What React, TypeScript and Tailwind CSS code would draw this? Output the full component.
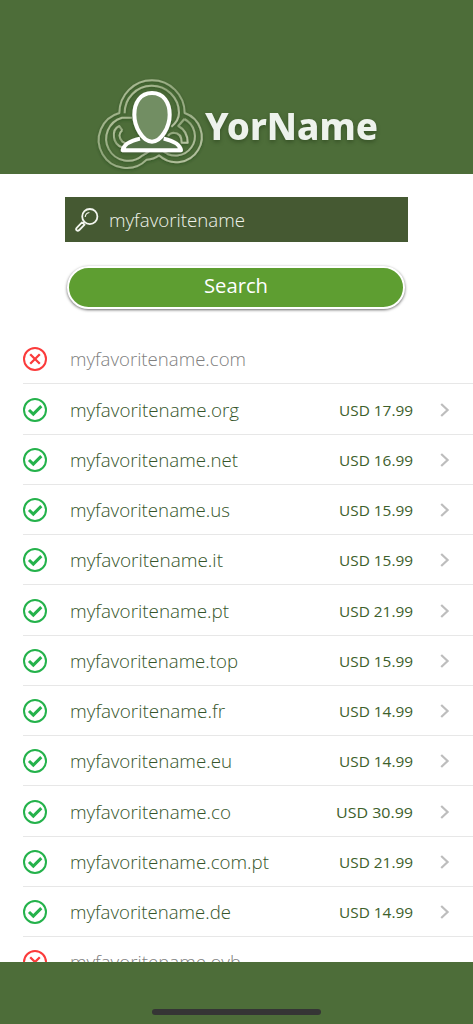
import React from "react";

type Domain = { ext: string; price?: string; width: string };

const domains: Domain[] = [
  { ext: "com", width: "176" },
  { ext: "org", price: "17.99", width: "169" },
  { ext: "net", price: "16.99", width: "168" },
  { ext: "us", price: "15.99", width: "160" },
  { ext: "it", price: "15.99", width: "153" },
  { ext: "pt", price: "21.99", width: "159" },
  { ext: "top", price: "15.99", width: "168" },
  { ext: "fr", price: "14.99", width: "155" },
  { ext: "eu", price: "14.99", width: "162" },
  { ext: "co", price: "30.99", width: "161" },
  { ext: "com.pt", price: "21.99", width: "199" },
  { ext: "de", price: "14.99", width: "161" },
  { ext: "ovh", width: "171" },
];

function Logo() {
  return (
    <svg viewBox="0 0 360 315" className="h-[105px] w-[120px] shrink-0 overflow-visible" fill="none">
      <defs>
        <linearGradient id="ring" x1="0" y1="0" x2="1" y2="1">
          <stop offset="0" stopColor="#b9c7a2" />
          <stop offset="0.45" stopColor="#8fa57a" />
          <stop offset="1" stopColor="#bac6a5" />
        </linearGradient>
        <filter id="shade" x="-20%" y="-20%" width="140%" height="150%">
          <feDropShadow dx="0" dy="4" stdDeviation="4" floodColor="#1f3315" floodOpacity="0.4" />
        </filter>
      </defs>
      <g stroke="url(#ring)" strokeWidth="6" strokeLinejoin="round" filter="url(#shade)">
        <path d="M88 129A98 98 0 0 1 284 129A76 76 0 1 1 207 256Q191 268 170 269A84 84 0 1 1 88 129Z" />
        <path d="M104 130A81 81 0 0 1 267 128Q267 151 244 170" />
        <path d="M104 130H126" />
        <path d="M126 143H96A66 66 0 1 0 158 256Q181 245 191 225" />
        <path d="M283 147A58 58 0 1 1 216 240L203 225" />
        <path d="M283 147L265 168Q293 183 293 218H275Q275 188 250 188Q239 189 234 198" />
        <path d="M97 181L88 168Q69 176 72 202Q75 225 98 233" />
        <path d="M97 181Q80 195 97 215L110 222" />
      </g>
      <g filter="url(#shade)" stroke="#fff" strokeWidth="12" strokeLinejoin="round">
        <path d="M150 206Q102 217 98 241H273Q269 217 221 206" fill="#54734a" />
        <path d="M186 69C151 69 133 98 133 134C133 170 158 215 186 215C214 215 239 170 239 134C239 98 221 69 186 69Z" fill="#728e64" />
      </g>
    </svg>
  );
}

function Magnifier() {
  return (
    <svg viewBox="0 0 24 24" className="h-6 w-6" fill="none" stroke="#f3f6ef" strokeWidth="1.8" strokeLinejoin="round">
      <circle cx="14.8" cy="8.6" r="7.6" />
      <path d="M9.1 14.3L7.9 15.5M7 14.4L1.7 19.8Q.5 21.2 1.7 22.3T4.3 22L9.6 16.6Z" />
      <path d="M10.2 9A5 5 0 0 1 14.4 4.5" strokeWidth="1.1" />
    </svg>
  );
}

function Status({ free }: { free: boolean }) {
  return (
    <svg viewBox="0 0 24 24" className="h-6 w-6 shrink-0" fill="none" stroke={free ? "#24b24b" : "#fb3b3b"}>
      <circle cx="12" cy="12" r="11" strokeWidth="2" />
      {free ? (
        <path d="M6 12L10.3 16.1L18.3 8.1" strokeWidth="3" />
      ) : (
        <path d="M7.2 7.2L16.8 16.8M16.8 7.2L7.2 16.8" strokeWidth="2.3" />
      )}
    </svg>
  );
}

function Label({ text, width, className }: { text: string; width: string; className: string }) {
  return (
    <svg width={width} height="28" className={"shrink-0 overflow-visible " + className} fill="currentColor">
      <text x="0" y="20" textLength={width} lengthAdjust="spacingAndGlyphs">{text}</text>
    </svg>
  );
}

export default function App() {
  return (
    <div className="flex h-[1024px] w-[473px] flex-col overflow-hidden bg-white font-['Open_Sans','Noto_Sans',sans-serif]">
      <header className="flex h-[174px] shrink-0 items-start bg-[#4d6d39] pt-[70px] pl-[90px]">
        <Logo />
        <Label text="YorName" width="173" className="-ml-[5px] mt-[50px] font-['Noto_Sans',sans-serif] text-[37px] font-extrabold text-[#edf2ec] drop-shadow-[0_2px_2px_rgba(20,40,10,0.4)]" />
      </header>
      <main className="flex min-h-0 flex-1 flex-col overflow-hidden">
        <div className="mt-[23px] ml-[65px] flex h-[45px] w-[343px] shrink-0 items-center bg-[#455932] pl-[10px]">
          <Magnifier />
          <Label text="myfavoritename" width="136" className="mt-[2px] ml-[10px] text-[18px] font-[360] text-[#f0f3eb]" />
        </div>
        <button className="mt-[24px] ml-[67px] flex h-[43px] w-[338px] shrink-0 items-center justify-center rounded-full border-2 border-white bg-[#5e9e31] shadow-[0_1px_3px_rgba(0,0,0,0.6)]">
          <Label text="Search" width="64" className="-mt-px text-[20px] font-medium text-white" />
        </button>
        <ul className="mt-[25.2px] shrink-0">
          {domains.map((domain) => (
            <li key={domain.ext} className="ml-[23px] flex h-[50.25px] items-center border-b border-[#e7e7e7] pt-px">
              <Status free={!!domain.price} />
              <Label
                text={"myfavoritename." + domain.ext}
                width={domain.width}
                className={domain.price ? "mt-[2px] ml-[23px] text-[18px] font-[360] text-[#35552a]" : "mt-[2px] ml-[23px] text-[18px] font-[360] text-[#808080]"}
              />
              {domain.price && (
                <div className="mr-[23px] ml-auto flex items-center">
                  <Label
                    text={"USD " + domain.price}
                    width={domain.price === "30.99" ? "77" : "74"}
                    className="text-[15px] font-[380] text-[#3d602b]"
                  />
                  <svg viewBox="0 0 10 14" className="ml-[27px] h-[14px] w-[10px]" fill="none" stroke="#bdbdbd" strokeWidth="2.2">
                    <path d="M1.2 1L7.6 7L1.2 13" />
                  </svg>
                </div>
              )}
            </li>
          ))}
        </ul>
      </main>
      <footer className="flex h-[62px] shrink-0 items-end justify-center bg-[#4d6d39] pb-[9px]">
        <div className="h-[6px] w-[169px] rounded-full bg-[#353535]" />
      </footer>
    </div>
  );
}
